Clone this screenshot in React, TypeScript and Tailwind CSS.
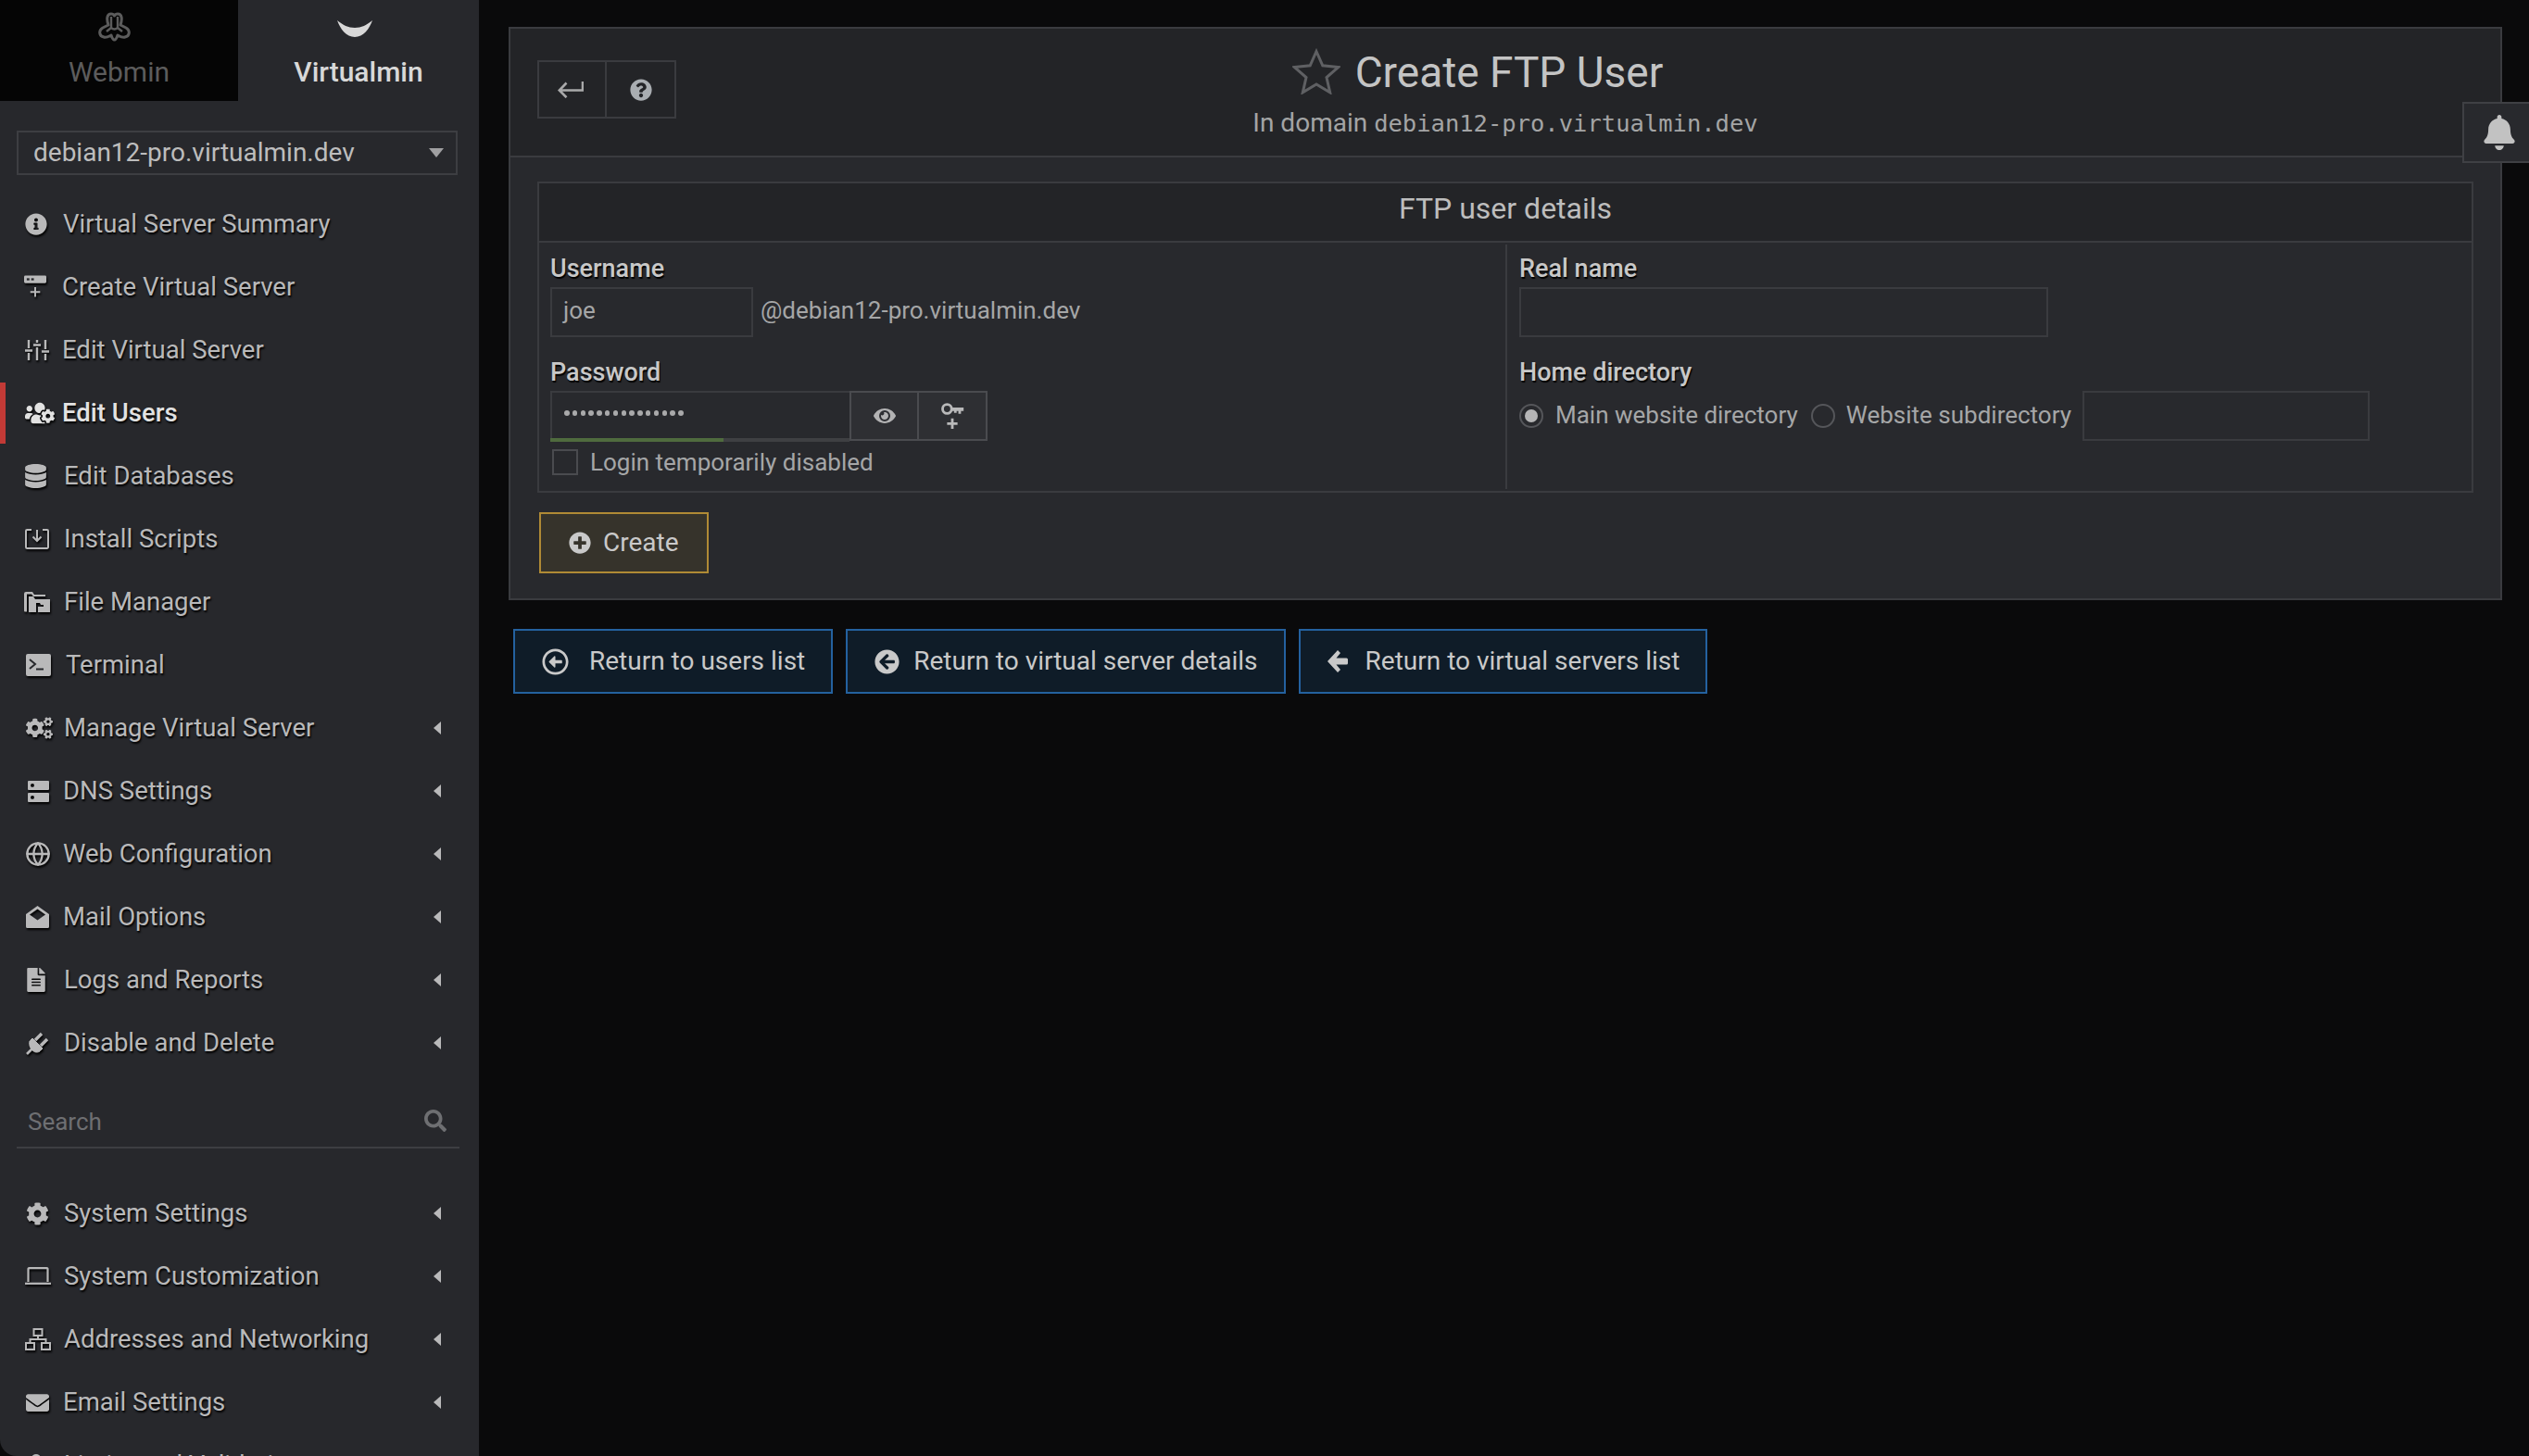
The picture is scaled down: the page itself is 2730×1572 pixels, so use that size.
import React from "react";
import { FaInfoCircle, FaUsersCog, FaDatabase, FaCogs, FaFileAlt, FaCog, FaEnvelope, FaSearch, FaQuestionCircle, FaEye, FaPlusCircle, FaRegArrowAltCircleLeft, FaArrowCircleLeft, FaBell, FaUser } from "react-icons/fa";
import { FiGlobe } from "react-icons/fi";

const shadow = "[text-shadow:1px_2px_2px_#000]";
const iconShadow = "[filter:drop-shadow(1px_2px_1px_#000)]";

const CreateServer = () => (
  <svg viewBox="0 0 26 26" className="w-[25px] h-[26px]" fill="currentColor">
    <path d="M0 1.500A1.500 1.500 0 0 1 1.500 0h22A1.500 1.500 0 0 1 25 1.500V7a1.500 1.500 0 0 1-1.500 1.500h-22A1.500 1.500 0 0 1 0 7z" />
    <rect x="3" y="3" width="3" height="2.400" fill="#27282c" />
    <rect x="8" y="3" width="3" height="2.400" fill="#27282c" />
    <path d="M11.500 13h2v4.500H18v2h-4.500V24h-2v-4.500H7v-2h4.500z" />
  </svg>
);
const SlidersIcon = () => (
  <svg viewBox="0 0 26 22" className="w-[26px] h-[22px]" fill="none" stroke="currentColor" strokeWidth="2.400">
    <path d="M4 0v9M4 14v8M13 0v3M13 8v14M22 0v10M22 15v7" />
    <path d="M0 11.500h8M9 5.500h8M18 12.500h8" />
  </svg>
);
const InstallIcon = () => (
  <svg viewBox="0 0 26 22" className="w-[26px] h-[22px]" fill="none" stroke="currentColor" strokeWidth="2">
    <path d="M7 1H2.200A1.200 1.200 0 0 0 1 2.200v17.600A1.200 1.200 0 0 0 2.200 21h21.600a1.200 1.200 0 0 0 1.200-1.200V2.200A1.200 1.200 0 0 0 23.800 1H19" />
    <path d="M13 1v11M8.500 8.500 13 13l4.500-4.500" />
  </svg>
);
const FilesIcon = () => (
  <svg viewBox="0 0 28 22" className="w-[28px] h-[22px]" fill="currentColor">
    <path d="M0 2a2 2 0 0 1 2-2h7l2 3h12v2H10L8 2.500H3v19H1a1 1 0 0 1-1-1z" />
    <path d="M5 5h5l2 3h16v14H5zM13 14v8h2v-6h6v6h0v-8h-3l-1-2h-4z" fillRule="evenodd" />
  </svg>
);
const TerminalIcon = () => (
  <svg viewBox="0 0 27 24" className="w-[27px] h-[24px]">
    <rect width="27" height="24" rx="2" fill="currentColor" />
    <path d="M4 6l6 5-6 5" fill="none" stroke="#27282c" strokeWidth="2" />
    <path d="M11 16.500h8" stroke="#27282c" strokeWidth="2" />
  </svg>
);
const LaptopIcon = () => (
  <svg viewBox="0 0 28 20" className="w-[28px] h-[20px]" fill="none" stroke="currentColor" strokeWidth="2.200">
    <path d="M3.500 16V2.100A1 1 0 0 1 4.500 1.100h19a1 1 0 0 1 1 1V16" />
    <path d="M0 17.800h28" />
  </svg>
);
const NetworkIcon = () => (
  <svg viewBox="0 0 28 24" className="w-[28px] h-[24px]" fill="none" stroke="currentColor" strokeWidth="2">
    <rect x="9.500" y="1" width="9" height="7" />
    <rect x="1" y="16" width="9" height="7" />
    <rect x="18" y="16" width="9" height="7" />
    <path d="M14 8v4M5.500 16v-4h17v4" />
  </svg>
);
const DnsIcon = () => (
  <svg viewBox="0 0 23 23" className="w-[23px] h-[23px]" fill="currentColor">
    <path fillRule="evenodd" d="M0 1a1 1 0 0 1 1-1h21a1 1 0 0 1 1 1v8a1 1 0 0 1-1 1H1a1 1 0 0 1-1-1zM5 3a2 2 0 1 0 0 4 2 2 0 0 0 0-4zM0 14a1 1 0 0 1 1-1h21a1 1 0 0 1 1 1v8a1 1 0 0 1-1 1H1a1 1 0 0 1-1-1zM5 16a2 2 0 1 0 0 4 2 2 0 0 0 0-4z" />
  </svg>
);
const MailOpenIcon = () => (
  <svg viewBox="0 0 25 24" className="w-[25px] h-[24px]" fill="currentColor">
    <path fillRule="evenodd" d="M0 9 12.500 0 25 9v13.500a1.500 1.500 0 0 1-1.500 1.500h-22A1.500 1.500 0 0 1 0 22.500zM4 9.500l8.500 6 8.500-6-8.500-6z" />
  </svg>
);
const PlugIcon = () => (
  <svg viewBox="0 0 26 26" className="w-[26px] h-[26px]" fill="none" stroke="currentColor">
    <path d="M1 25l6-6" strokeWidth="2.600" />
    <path d="M4 11 15 22c-3 2-6 1-8-1s-4-5-3-10z" fill="currentColor" strokeWidth="1" />
    <path d="M4.500 10.500 15.500 21.500 18 19 7 8z" fill="currentColor" strokeWidth="1" />
    <path d="M10 10 17 3M16 16l7-7" strokeWidth="3.400" />
  </svg>
);
const ChunkyArrow = () => (
  <svg viewBox="0 0 22 24" className="w-[22px] h-[24px]" fill="currentColor">
    <path d="M11 0 14 3 9.500 8.500H20.500A1.500 1.500 0 0 1 22 10v4a1.500 1.500 0 0 1-1.500 1.500H9.500L14 21 11 24 0 12z" />
  </svg>
);
const WebminLogo = () => (
  <svg viewBox="0 0 35 32" className="w-[35px] h-[32px]" fill="none" stroke="currentColor" strokeWidth="3" strokeLinejoin="round">
    <path d="M11 14C9 8 9 2 14 2c2 0 3 1 3.500 2 .5-1 1.500-2 3.500-2 5 0 5 6 3 12l6 3c5 3 4 9-1 10-3 1-6-1-8-2-1 3-2 5-3.500 5S15 28 14 25c-2 1-5 3-8 2-5-1-6-7-1-10z" />
    <path d="M14 5v12l-5 4M21 5v12l5 4M14 17q3.500 3 7 0" strokeWidth="2.400" />
  </svg>
);
const VirtualminLogo = () => (
  <svg viewBox="0 0 38 18" className="w-[38px] h-[18px]" fill="currentColor">
    <path d="M0 0c6 5 12 8 19 8s13-3 19-8c-3 9-10 18-19 18S3 9 0 0z" />
  </svg>
);
const KeyPlus = () => (
  <svg viewBox="0 0 26 32" className="w-[26px] h-[30px]">
    <circle cx="7" cy="8" r="5.200" fill="none" stroke="currentColor" strokeWidth="3" />
    <path d="M11 6.500h15v4h-3v3h-3v-3h-2v2h-3v-2h-4z" fill="currentColor" />
    <path d="M11.500 19h3v4.500H19v3h-4.500V31h-3v-4.500H7v-3h4.500z" fill="currentColor" />
  </svg>
);
const BackArrow = () => (
  <svg viewBox="0 0 28 18" className="w-[28px] h-[18px] -ml-[3px]" fill="none" stroke="currentColor" strokeWidth="2.600">
    <path d="M27 0v9.500H2M9.500 1.500 1.800 9.500l7.700 7.700" />
  </svg>
);
const Star = () => (
  <svg viewBox="0 0 52 50" className="w-[52px] h-[50px] -mt-[3px] text-[#5f6063]" fill="none" stroke="currentColor" strokeWidth="3">
    <path d="M26 3.500l6.800 15.300 17 1.700-12.800 11 3.700 16.300L26 39l-14.700 8.800L15 31.500 2.200 20.500l17-1.700z" />
  </svg>
);
const Caret = () => <span className="ml-auto mr-[41px] w-0 h-0 border-y-[7px] border-y-transparent border-r-[8px] border-r-[#b9b9ba]" />;

const menuA = [
  { t: "Virtual Server Summary", i: <FaInfoCircle className="w-[24px] h-[24px]" />, gap: "ml-[27px] w-[41px]" },
  { t: "Create Virtual Server", i: <CreateServer />, gap: "ml-[26px] w-[41px]" },
  { t: "Edit Virtual Server", i: <SlidersIcon />, gap: "ml-[27px] w-[40px]" },
  { t: "Edit Users", i: <FaUsersCog className="w-[32px] h-[26px]" />, gap: "ml-[27px] w-[40px]", active: true },
  { t: "Edit Databases", i: <FaDatabase className="w-[23px] h-[26px]" />, gap: "ml-[27px] w-[42px]" },
  { t: "Install Scripts", i: <InstallIcon />, gap: "ml-[27px] w-[42px]" },
  { t: "File Manager", i: <FilesIcon />, gap: "ml-[26px] w-[43px]" },
  { t: "Terminal", i: <TerminalIcon />, gap: "ml-[28px] w-[43px]" },
  { t: "Manage Virtual Server", i: <FaCogs className="w-[29px] h-[26px]" />, gap: "ml-[28px] w-[41px]", c: true },
  { t: "DNS Settings", i: <DnsIcon />, gap: "ml-[30px] w-[38px]", c: true },
  { t: "Web Configuration", i: <FiGlobe className="w-[28px] h-[28px]" />, gap: "ml-[27px] w-[41px]", c: true },
  { t: "Mail Options", i: <MailOpenIcon />, gap: "ml-[28px] w-[40px]", c: true },
  { t: "Logs and Reports", i: <FaFileAlt className="w-[22px] h-[26px]" />, gap: "ml-[28px] w-[41px]", c: true },
  { t: "Disable and Delete", i: <PlugIcon />, gap: "ml-[28px] w-[41px]", c: true },
];
const menuB = [
  { t: "System Settings", i: <FaCog className="w-[25px] h-[25px]" />, gap: "ml-[28px] w-[41px]", c: true },
  { t: "System Customization", i: <LaptopIcon />, gap: "ml-[27px] w-[42px]", c: true },
  { t: "Addresses and Networking", i: <NetworkIcon />, gap: "ml-[27px] w-[42px]", c: true },
  { t: "Email Settings", i: <FaEnvelope className="w-[25px] h-[25px]" />, gap: "ml-[28px] w-[40px]", c: true },
  { t: "Limits and Validation", i: <FaUser className="w-[22px] h-[24px]" />, gap: "ml-[28px] w-[41px]", c: true },
];

type Item = { t: string; i: React.ReactNode; gap: string; c?: boolean; active?: boolean };
const Row = ({ m }: { m: Item }) => (
  <div className={`relative h-[68px] flex items-center shrink-0 ${m.active ? "text-[#e2e2e2] font-medium" : "text-[#b9b9ba]"}`}>
    {m.active && <span className="absolute left-0 top-[1px] bottom-[1px] w-[6px] bg-[#c23a36]" />}
    <span className={`${m.gap} flex items-center ${iconShadow}`}>{m.i}</span>
    <span className={`text-[27.500px] leading-none ${shadow}`}>{m.t}</span>
    {m.c && <Caret />}
  </div>
);

const inputBase = "h-[54px] border-2 border-[#3a3b3f] bg-[#28292d]";
const labelBase = `h-[28px] leading-[28px] text-[27px] font-medium text-[#c8c8c8] [text-shadow:1px_2px_1px_#000]`;

const ReturnBtn = ({ icon, label, iconBox }: { icon: React.ReactNode; label: string; iconBox: string }) => (
  <button className="h-[70px] pl-[29px] pr-[28px] flex items-center border-2 border-[#24619f] bg-[#0f1c28] text-[#c9c9c9] text-[28px]">
    <span className={`${iconBox} flex items-center`}>{icon}</span>
    <span>{label}</span>
  </button>
);

export default function App() {
  return (
    <div className="relative w-[2730px] h-[1572px] overflow-hidden flex bg-[#0a0a0b] font-['Roboto',sans-serif]">
      <aside className="w-[517px] shrink-0 h-full overflow-hidden bg-[#27282c] rounded-bl-[18px] flex flex-col">
        <div className="flex h-[110px] shrink-0 items-start">
          <div className="w-[257px] h-[109px] bg-[#050505] flex flex-col items-center text-[#5c5c5c]">
            <span className="mt-[13px] h-[32px] -ml-[10px]"><WebminLogo /></span>
            <span className="mt-[18px] text-[30px] leading-none">Webmin</span>
          </div>
          <div className="flex-1 flex flex-col items-center text-[#d8d8d8]">
            <span className="mt-[22px] h-[18px] -ml-[8px]"><VirtualminLogo /></span>
            <span className="mt-[23px] text-[30px] leading-none font-medium">Virtualmin</span>
          </div>
        </div>
        <div className="mx-[18px] mt-[31px] w-[476px] h-[48px] shrink-0 border-2 border-[#3d3e42] flex items-center pl-[16px] text-[#bdbdbd] text-[28px]">
          <span>debian12-pro.virtualmin.dev</span>
          <span className="ml-auto mr-[13px] w-0 h-0 border-x-[8px] border-x-transparent border-t-[10px] border-t-[#a0a0a2]" />
        </div>
        <div className="mt-[19px] flex flex-col">
          {menuA.map((m) => <Row key={m.t} m={m} />)}
        </div>
        <div className="mx-[18px] w-[478px] h-[80px] shrink-0 border-b-2 border-[#3d3e42] flex items-center pt-[24px] pl-[12px] text-[#6e6f72]">
          <span className="text-[26px]">Search</span>
          <FaSearch className="ml-auto mr-[14px] w-[24px] h-[24px] -mt-[2px]" />
        </div>
        <div className="mt-[36px] flex flex-col">
          {menuB.map((m) => <Row key={m.t} m={m} />)}
        </div>
      </aside>

      <main className="flex-1 min-w-0 pl-[32px] pr-[29px] pt-[29px]">
        <section className="border-2 border-[#3a3b3f] bg-[#28292d]">
          <header className="h-[139px] bg-[#232427] border-b-2 border-[#3a3b3f] grid grid-cols-[1fr_auto_1fr]">
            <div className="pl-[29px] pt-[34px]">
              <div className="flex w-[150px] h-[63px] border-2 border-[#3a3b3f] text-[#a9a9aa]">
                <span className="w-[73px] border-r-2 border-[#3a3b3f] flex items-center justify-center"><BackArrow /></span>
                <span className="flex-1 flex items-center justify-center"><FaQuestionCircle className="w-[24px] h-[24px] text-[#a9adb1]" /></span>
              </div>
            </div>
            <div className="flex flex-col items-center">
              <div className="flex items-center mt-[21px] h-[52px] mr-[60px]">
                <Star />
                <span className="ml-[16px] text-[46px] leading-none text-[#c4c4c4]">Create FTP User</span>
              </div>
              <div className="mt-[13px] text-[28px] leading-[32px] text-[#a3a4a5]">
                In domain <span className="font-['DejaVu_Sans_Mono',monospace] text-[25.500px]">debian12-pro.virtualmin.dev</span>
              </div>
            </div>
            <div />
          </header>

          <div className="px-[29px] pt-[26px] pb-[27px]">
            <div className="border-2 border-[#3a3b3f]">
              <div className="h-[64px] pb-[9px] bg-[#232427] border-b-2 border-[#3a3b3f] flex items-center justify-center text-[32px] text-[#bdbdbd]">FTP user details</div>
              <div className="flex h-[268px]">
                <div className="w-[1043px] shrink-0 pl-[12px] pt-[14px]">
                  <div className={`${labelBase} mb-[6px]`}>Username</div>
                  <div className="flex items-center">
                    <div className={`${inputBase} w-[219px] pl-[12px] pb-[3px] flex items-center text-[26px] text-[#a5a6a7]`}>joe</div>
                    <span className="ml-[8px] pb-[3px] text-[26px] text-[#a5a6a7]">@debian12-pro.virtualmin.dev</span>
                  </div>
                  <div className={`${labelBase} mt-[24px] mb-[6px]`}>Password</div>
                  <div className="flex h-[54px]">
                    <div className={`relative ${inputBase} w-[323px] border-r-0 pl-[13px] flex items-center text-[#a5a6a7]`}>
                      <span className="flex gap-[3.300px] -mt-[6px]">
                        {Array.from({ length: 15 }).map((_, i) => <span key={i} className="w-[5.500px] h-[5.500px] rounded-full bg-[#a9a9aa]" />)}
                      </span>
                      <span className="absolute left-[-2px] right-0 bottom-[-3px] h-[4px] bg-[#3f4043]">
                        <span className="block w-[187px] h-full bg-[#4f6b3e]" />
                      </span>
                    </div>
                    <div className="w-[75px] border-2 border-[#4a4b4f] bg-[#2e2f33] flex items-center justify-center text-[#b3b3b4]"><FaEye className="w-[24px] h-[24px]" /></div>
                    <div className="w-[76px] -ml-[2px] border-2 border-[#4a4b4f] bg-[#2e2f33] flex items-center justify-center text-[#b9b9ba]"><KeyPlus /></div>
                  </div>
                  <div className="mt-[9px] flex items-center h-[28px]">
                    <span className="ml-[2px] w-[28px] h-[28px] border-2 border-[#4a4b4f]" />
                    <span className="ml-[13px] text-[26px] text-[#a5a6a7]">Login temporarily disabled</span>
                  </div>
                </div>
                <div className="flex-1 my-[2px] border-l-2 border-[#3a3b3f] pl-[13px] pt-[12px]">
                  <div className={`${labelBase} mb-[6px]`}>Real name</div>
                  <div className={`${inputBase} w-[571px]`} />
                  <div className={`${labelBase} mt-[24px] mb-[6px]`}>Home directory</div>
                  <div className="flex items-center h-[54px] text-[26px] text-[#a5a6a7]">
                    <span className="w-[26px] h-[26px] rounded-full border-2 border-[#55565a] flex items-center justify-center"><span className="w-[14px] h-[14px] rounded-full bg-[#b5b5b6]" /></span>
                    <span className="ml-[13px] pb-[2px]">Main website directory</span>
                    <span className="ml-[14px] w-[26px] h-[26px] rounded-full border-2 border-[#55565a]" />
                    <span className="ml-[12px] pb-[2px]">Website subdirectory</span>
                    <div className={`${inputBase} ml-[12px] w-[310px]`} />
                  </div>
                </div>
              </div>
            </div>
            <button className="mt-[21px] ml-[2px] h-[66px] w-[183px] border-2 border-[#b08a35] bg-[#36332b] flex items-center pl-[30px] text-[#c9c9c9] text-[28px]">
              <FaPlusCircle className="w-[24px] h-[24px] mr-[13px]" />
              Create
            </button>
          </div>
        </section>

        <div className="mt-[31px] ml-[5px] flex gap-[14px]">
          <ReturnBtn iconBox="w-[51px]" icon={<FaRegArrowAltCircleLeft className="w-[29px] h-[29px]" />} label="Return to users list" />
          <ReturnBtn iconBox="w-[42px]" icon={<FaArrowCircleLeft className="w-[27px] h-[27px]" />} label="Return to virtual server details" />
          <ReturnBtn iconBox="w-[41px]" icon={<ChunkyArrow />} label="Return to virtual servers list" />
        </div>
      </main>

      <div className="absolute right-0 top-[110px] w-[72px] h-[66px] border-2 border-r-0 border-[#3f4044] bg-[#28292d] flex items-center justify-center text-[#c2c2c2]">
        <FaBell className="w-[36px] h-[38px] ml-[6px] -mt-[1px]" />
      </div>
    </div>
  );
}
